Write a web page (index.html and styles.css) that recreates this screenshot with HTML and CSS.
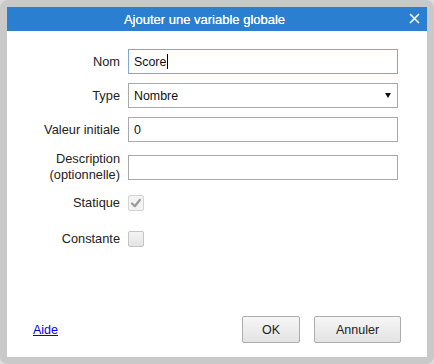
FILE: index.html
```html
<!DOCTYPE html>
<html lang="fr">
<head>
<meta charset="utf-8">
<title>Ajouter une variable globale</title>
<link rel="stylesheet" href="styles.css">
</head>
<body>
<div class="frame">
  <div class="dialog">
    <div class="titlebar">
      <span class="title">Ajouter une variable globale</span>
      <span class="close">
        <svg width="11" height="11" viewBox="0 0 11 11"><path d="M1 1 L10 10 M10 1 L1 10" stroke="#fff" stroke-width="1.6" fill="none"/></svg>
      </span>
    </div>
    <div class="form">
      <div class="label">Nom</div>
      <div class="field focus"><span>Score</span><span class="caret"></span></div>

      <div class="label">Type</div>
      <div class="field select"><span>Nombre</span><span class="arrow"></span></div>

      <div class="label">Valeur initiale</div>
      <div class="field"><span>0</span></div>

      <div class="label two">Description<br>(optionnelle)</div>
      <div class="field"></div>

      <div class="label">Statique</div>
      <div class="check-cell"><span class="checkbox checked">
        <svg width="14" height="14" viewBox="0 0 14 14"><path d="M3 7.5 L5.8 10.2 L11 3.8" stroke="#9a9a9a" stroke-width="2.2" fill="none" stroke-linecap="round" stroke-linejoin="round"/></svg>
      </span></div>

      <div class="label">Constante</div>
      <div class="check-cell"><span class="checkbox"></span></div>
    </div>
    <div class="footer">
      <a class="help" href="#">Aide</a>
      <div class="buttons">
        <button class="btn ok">OK</button>
        <button class="btn cancel">Annuler</button>
      </div>
    </div>
  </div>
</div>
</body>
</html>
```
FILE: styles.css
```css
* { box-sizing: border-box; }
html, body { margin: 0; padding: 0; }
body {
  background: #dcdcdc;
  font-family: "Liberation Sans", Arial, sans-serif;
  font-size: 12.5px;
  color: #222;
}
.frame {
  width: 434px;
  height: 364px;
  padding: 7px;
  background: #c9c9c9;
  border-radius: 8px;
}
.dialog {
  width: 420px;
  height: 350px;
  background: #fff;
  display: flex;
  flex-direction: column;
}
.titlebar {
  height: 24px;
  background: #2b7fd0;
  color: #fff;
  display: flex;
  align-items: center;
  justify-content: center;
  position: relative;
  font-size: 13px;
  padding-right: 25px;
}
.title { text-shadow: 0 0 0.4px #fff; }
.close {
  position: absolute;
  right: 7px;
  top: 6px;
  width: 11px;
  height: 11px;
  display: flex;
}
.form {
  flex: 1;
  display: grid;
  grid-template-columns: 113px 270px;
  grid-template-rows: 25px 25px 25px 32px 22px 32px;
  column-gap: 8px;
  row-gap: 9px;
  padding-top: 18px;
  align-content: start;
}
.label {
  text-align: right;
  align-self: center;
  line-height: 16px;
  font-size: 12.8px;
}
.field {
  height: 25px;
  align-self: center;
  border: 1px solid #a9a9a9;
  padding: 0 5px;
  display: flex;
  align-items: center;
  color: #111;
  font-size: 12.4px;
}
.field.focus { border-color: #7da7dd; }
.caret {
  width: 1px;
  height: 15px;
  background: #000;
  margin-left: 1px;
}
.select { justify-content: space-between; padding-right: 6px; }
.arrow {
  width: 0;
  height: 0;
  border-left: 3px solid transparent;
  border-right: 3px solid transparent;
  border-top: 5px solid #111;
}
.check-cell { display: flex; align-items: center; }
.checkbox {
  width: 16px;
  height: 16px;
  border: 1px solid #c4c4c4;
  border-radius: 2px;
  background: linear-gradient(#f4f4f4, #e4e4e4);
  display: flex;
  align-items: center;
  justify-content: center;
}
.checkbox.checked { background: #f3f3f3; border-color: #d4d4d4; }
.footer {
  display: flex;
  justify-content: space-between;
  align-items: center;
  padding: 0 26px 14px 26px;
}
.help {
  color: #0000ee;
  text-decoration: underline;
  font-size: 12.5px;
}
.buttons { display: flex; gap: 14px; }
.btn {
  height: 27px;
  border: 1px solid #acacac;
  border-radius: 2px;
  background: linear-gradient(#f6f6f6, #e3e3e3);
  font-family: inherit;
  font-size: 12.5px;
  color: #222;
  padding: 0;
}
.ok { width: 58px; }
.cancel { width: 87px; }
```
